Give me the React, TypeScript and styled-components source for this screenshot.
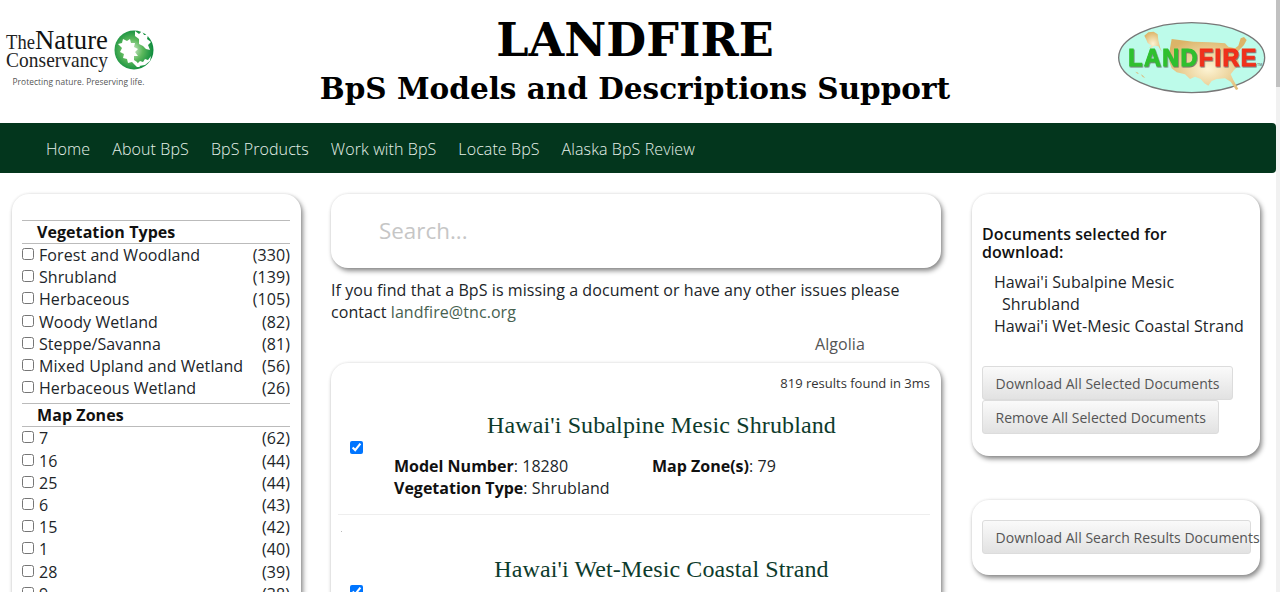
import React from 'react';
import styled, { createGlobalStyle } from 'styled-components';

interface FacetItem {
  label: string;
  count: number;
}

const vegetationTypes: FacetItem[] = [
  { label: 'Forest and Woodland', count: 330 },
  { label: 'Shrubland', count: 139 },
  { label: 'Herbaceous', count: 105 },
  { label: 'Woody Wetland', count: 82 },
  { label: 'Steppe/Savanna', count: 81 },
  { label: 'Mixed Upland and Wetland', count: 56 },
  { label: 'Herbaceous Wetland', count: 26 },
];

const mapZones: FacetItem[] = [
  { label: '7', count: 62 },
  { label: '16', count: 44 },
  { label: '25', count: 44 },
  { label: '6', count: 43 },
  { label: '15', count: 42 },
  { label: '1', count: 40 },
  { label: '28', count: 39 },
  { label: '9', count: 38 },
  { label: '2', count: 37 },
];

const navLinks = ['Home', 'About BpS', 'BpS Products', 'Work with BpS', 'Locate BpS', 'Alaska BpS Review'];

const GlobalStyle = createGlobalStyle`
  body {
    margin: 0 4px 0 0;
    background: #fff;
    color: #212529;
    font-family: 'Open Sans', sans-serif;
    font-size: 16px;
    letter-spacing: 0.07px;
  }
`;

const TncLogo = () => (
  <svg width="160" height="75" viewBox="0 0 160 75">
    <defs>
      <radialGradient id="tncGlobe" cx="0.45" cy="0.5" r="0.55">
        <stop offset="0" stopColor="#d8ecd4" />
        <stop offset="0.5" stopColor="#5cb85c" />
        <stop offset="1" stopColor="#0b8a3c" />
      </radialGradient>
    </defs>
    <text
      x="6"
      y="29"
      fontFamily="Liberation Serif, serif"
      fontSize="20"
      fill="#222"
      textLength="29"
      lengthAdjust="spacingAndGlyphs"
    >
      The
    </text>
    <text
      x="35"
      y="29"
      fontFamily="Liberation Serif, serif"
      fontSize="28"
      fill="#111"
      textLength="73"
      lengthAdjust="spacingAndGlyphs"
    >
      Nature
    </text>
    <text
      x="6"
      y="47"
      fontFamily="Liberation Serif, serif"
      fontSize="21.5"
      fill="#222"
      textLength="102"
      lengthAdjust="spacingAndGlyphs"
    >
      Conservancy
    </text>
    <text
      x="12.5"
      y="65"
      fontFamily="Open Sans, sans-serif"
      fontSize="9"
      fill="#555"
      textLength="132"
      lengthAdjust="spacingAndGlyphs"
    >
      Protecting nature. Preserving life.
    </text>
    <circle cx="134" cy="30" r="19.5" fill="url(#tncGlobe)" />
    <path
      d="M118 24l4-1 1-4 4 2 3-2 1 4 4 0-1 4 4 2-3 3 3 4-4 0 0 4 3 2 3 5-3 0-5-5-4 1-1-4-4-1 1-4-4-2 2-4z"
      fill="#fff"
    />
    <path d="M135 11l4 3 3-3 2 4 4 0-1 4 4 3-3 3 2 5-4-1-3-3-4-2 0-5-4-3 0-5z" fill="#fff" />
    <path d="M136 45l4-4 3 1 2-3 3 1 3-4-1 5-5 4-6 1-3-1z" fill="#fff" />
  </svg>
);

const LandfireLogo = () => (
  <svg width="160" height="85" viewBox="0 0 480 255">
    <defs>
      <radialGradient id="lfLand" cx="0.5" cy="0.6" r="0.6">
        <stop offset="0" stopColor="#fdf4d4" />
        <stop offset="1" stopColor="#dcb468" />
      </radialGradient>
      <filter id="lfShadow" x="-5%" y="-5%" width="110%" height="120%">
        <feDropShadow dx="2" dy="3" stdDeviation="1.5" floodColor="#555" floodOpacity="0.8" />
      </filter>
    </defs>
    <ellipse cx="245" cy="128" rx="219" ry="105" fill="#bdfbea" stroke="#777" strokeWidth="4" />
    <path
      d="M185 72L250 80L300 82L345 85L355 95L375 100L385 92L392 70L402 66L410 75L402 90L388 105L378 118L385 135L388 150L372 165L362 178L370 195L385 222L378 225L362 200L345 190L320 192L305 198L295 212L283 205L272 192L255 185L240 192L225 178L200 172L185 160L178 140L180 100Z"
      fill="url(#lfLand)"
    />
    <path
      d="M103 62L115 52L131 50L143 58L145 76L151 100L155 110L145 94L133 92L125 98L117 98L125 92L113 84L109 74Z"
      fill="url(#lfLand)"
    />
    <path d="M76 170l6 2 5 4-5 0zM92 178l6 3 8 8-8-3z" fill="#d8c08a" />
    <text
      x="55"
      y="154"
      fontFamily="Liberation Sans, sans-serif"
      fontWeight="700"
      fontSize="70"
      letterSpacing="4.3"
      strokeWidth="3"
      filter="url(#lfShadow)"
    >
      <tspan fill="#2fc02f" stroke="#2fc02f">
        LAND
      </tspan>
      <tspan fill="#f0301a" stroke="#f0301a">
        FIRE
      </tspan>
    </text>
    <text x="441" y="153" fontFamily="Liberation Sans, sans-serif" fontSize="11" fill="#555">
      TM
    </text>
  </svg>
);

const FacetGroup: React.FC<{ title: string; items: FacetItem[] }> = ({ title, items }) => (
  <Facet>
    <FacetTitle>{title}</FacetTitle>
    {items.map(item => (
      <FacetRow key={item.label}>
        <FacetCheck type="checkbox" />
        <FacetLabel>{item.label}</FacetLabel>
        <span>({item.count})</span>
      </FacetRow>
    ))}
  </Facet>
);

const App: React.FC = () => {
  return (
    <>
      <GlobalStyle />
      <Header>
        <LeftLogo>
          <TncLogo />
        </LeftLogo>
        <Titles>
          <MainTitle>LANDFIRE</MainTitle>
          <SubTitle>BpS Models and Descriptions Support</SubTitle>
        </Titles>
        <RightLogo>
          <LandfireLogo />
        </RightLogo>
      </Header>
      <NavBar>
        {navLinks.map(link => (
          <NavLink key={link} href="#">
            {link}
          </NavLink>
        ))}
      </NavBar>
      <Columns>
        <FilterCard>
          <FacetGroup title="Vegetation Types" items={vegetationTypes} />
          <FacetGroup title="Map Zones" items={mapZones} />
        </FilterCard>
        <div>
          <SearchCard>
            <SearchInput placeholder="Search..." />
          </SearchCard>
          <Notice>
            If you find that a BpS is missing a document or have any other issues please contact{' '}
            <MailLink href="#">landfire@tnc.org</MailLink>
          </Notice>
          <Algolia>Algolia</Algolia>
          <ResultsCard>
            <ResultCount>819 results found in 3ms</ResultCount>
            <Result>
              <ResultTitle>Hawai'i Subalpine Mesic Shrubland</ResultTitle>
              <ResultCheck type="checkbox" defaultChecked />
              <ResultFacts>
                <Fact>
                  <b>Model Number</b>: 18280
                </Fact>
                <Fact>
                  <b>Map Zone(s)</b>: 79
                </Fact>
                <Fact>
                  <b>Vegetation Type</b>: Shrubland
                </Fact>
              </ResultFacts>
            </Result>
            <Divider />
            <Speck />
            <Result $spaced>
              <ResultTitle>Hawai'i Wet-Mesic Coastal Strand</ResultTitle>
              <ResultCheck type="checkbox" defaultChecked />
            </Result>
          </ResultsCard>
        </div>
        <SideColumn>
          <SelectedCard>
            <SelectedHeading>Documents selected for download:</SelectedHeading>
            <SelectedList>
              <SelectedItem>Hawai'i Subalpine Mesic Shrubland</SelectedItem>
              <SelectedItem>Hawai'i Wet-Mesic Coastal Strand</SelectedItem>
            </SelectedList>
            <ActionButton>Download All Selected Documents</ActionButton>
            <ActionButton>Remove All Selected Documents</ActionButton>
          </SelectedCard>
          <DownloadCard>
            <ActionButton $clipped>Download All Search Results Documents</ActionButton>
          </DownloadCard>
        </SideColumn>
      </Columns>
      <ScrollTrack>
        <ScrollThumb />
      </ScrollTrack>
    </>
  );
};

const Header = styled.header`
  display: flex;
  justify-content: space-between;
  height: 123px;
`;

const LeftLogo = styled.div`
  padding-top: 20px;
  width: 160px;
`;

const RightLogo = styled.div`
  padding: 15px 6px 0 0;
  width: 160px;
`;

const Titles = styled.div`
  text-align: center;
  padding: 13px 0 0 0;
  font-family: 'DejaVu Serif', serif;
  font-weight: 700;
  color: #000;
  letter-spacing: 0;
`;

const MainTitle = styled.h1`
  margin: 0;
  font-size: 46px;
  line-height: 54px;
`;

const SubTitle = styled.h2`
  margin: 0;
  font-size: 29.5px;
  line-height: 44px;
`;

const NavBar = styled.nav`
  display: flex;
  align-items: center;
  height: 50px;
  padding: 1px 0 0 35px;
  box-sizing: border-box;
  background: #03361d;
  border-radius: 0 4px 4px 0;
`;

const NavLink = styled.a`
  padding: 0 11px;
  color: #e6f2ea;
  font-size: 16px;
  font-weight: 300;
  letter-spacing: 0.1px;
  text-decoration: none;
`;

const Columns = styled.main`
  display: grid;
  grid-template-columns: 289px 610px 289px;
  column-gap: 30px;
  align-items: start;
  padding: 21px 0 30px 12px;
  min-height: 3800px;
`;

const Card = styled.section`
  background: #fff;
  border-radius: 17px;
  box-shadow: 2px 3px 5px rgba(0, 0, 0, 0.45), 0 0 3px rgba(0, 0, 0, 0.1);
`;

const FilterCard = styled(Card)`
  padding: 26px 11px 20px 10px;
`;

const Facet = styled.div`
  margin-bottom: 4px;
`;

const FacetTitle = styled.h3`
  margin: 0;
  padding: 1px 0 0 15px;
  border-top: 1px solid #bbb;
  border-bottom: 1px solid #bbb;
  font-size: 16px;
  font-weight: 700;
  line-height: 21px;
  color: #111;
`;

const FacetRow = styled.label`
  display: flex;
  align-items: center;
  height: 22.2px;
  line-height: 22px;
  color: #212529;
`;

const FacetCheck = styled.input`
  width: 12px;
  height: 12px;
  margin: -2px 5px 0 0;
`;

const FacetLabel = styled.span`
  flex: 1;
`;

const SearchCard = styled(Card)`
  display: flex;
  align-items: center;
  height: 74px;
  padding: 0 0 2px 46px;
  box-sizing: border-box;
`;

const SearchInput = styled.input`
  width: 500px;
  border: none;
  outline: none;
  font-family: 'Open Sans', sans-serif;
  font-size: 22.4px;
  color: #333;

  &::placeholder {
    color: #c6c6c6;
  }
`;

const Notice = styled.p`
  margin: 11px 0 0;
  line-height: 22px;
`;

const MailLink = styled.a`
  color: #47614f;
  text-decoration: none;
`;

const Algolia = styled.div`
  margin: 10px 0 8px 484px;
  line-height: 22px;
  color: #555;
`;

const ResultsCard = styled(Card)`
  padding: 11px 11px 30px 7px;
  min-height: 400px;
`;

const ResultCount = styled.div`
  text-align: right;
  font-size: 13px;
  line-height: 18px;
  letter-spacing: 0;
  color: #333;
`;

const Result = styled.article<{ $spaced?: boolean }>`
  padding-top: ${({ $spaced }) => ($spaced ? '15px' : '11px')};
`;

const ResultTitle = styled.h4`
  margin: 7px 0 0 0;
  padding-left: 55px;
  text-align: center;
  font-family: 'Liberation Serif', serif;
  font-size: 24px;
  font-weight: 400;
  line-height: 30px;
  letter-spacing: 0.12px;
  color: #0d3b2c;
`;

const ResultCheck = styled.input`
  display: block;
  width: 13px;
  height: 13px;
  margin: 1px 0 0 12px;
`;

const ResultFacts = styled.div`
  display: grid;
  grid-template-columns: 258px 1fr;
  margin: 1px 0 0 56px;
  line-height: 22px;
`;

const Fact = styled.div`
  & > b {
    font-weight: 700;
    letter-spacing: 0;
    color: #111;
  }
`;

const Divider = styled.hr`
  margin: 15px 0 0;
  border: none;
  border-top: 1px solid #eee;
`;

const Speck = styled.div`
  width: 1px;
  height: 1px;
  margin: 16px 0 0 3px;
  background: #bbb;
`;

const SideColumn = styled.div`
  display: flex;
  flex-direction: column;
  gap: 44px;
  margin-left: 1px;
`;

const SelectedCard = styled(Card)`
  height: 262px;
  padding: 31px 11px 0 10px;
  box-sizing: border-box;
`;

const SelectedHeading = styled.h3`
  margin: 0;
  font-size: 16px;
  font-weight: 600;
  line-height: 18px;
  color: #111;
`;

const SelectedList = styled.ul`
  margin: 10px 0 29px;
  padding: 0 0 0 20px;
  list-style: none;
`;

const SelectedItem = styled.li`
  text-indent: -8px;
  line-height: 22px;
`;

const ActionButton = styled.button<{ $clipped?: boolean }>`
  display: block;
  width: ${({ $clipped }) => ($clipped ? '269px' : 'auto')};
  height: 34px;
  padding: 0 12.5px;
  margin: 0;
  border: 1px solid #dcdcdc;
  border-radius: 3px;
  background: linear-gradient(#fafafa, #e2e2e2);
  color: #555;
  font-family: 'Open Sans', sans-serif;
  font-size: 14px;
  letter-spacing: 0.03px;
  white-space: nowrap;
  text-align: left;
  overflow: visible;
`;

const DownloadCard = styled(Card)`
  height: 75px;
  padding: 20px 11px 0 10px;
  box-sizing: border-box;
`;

const ScrollTrack = styled.div`
  position: fixed;
  top: 0;
  right: 0;
  width: 4px;
  height: 100vh;
  background: #f1f1f1;
`;

const ScrollThumb = styled.div`
  height: 87px;
  background: #c1c1c1;
`;

export default App;
